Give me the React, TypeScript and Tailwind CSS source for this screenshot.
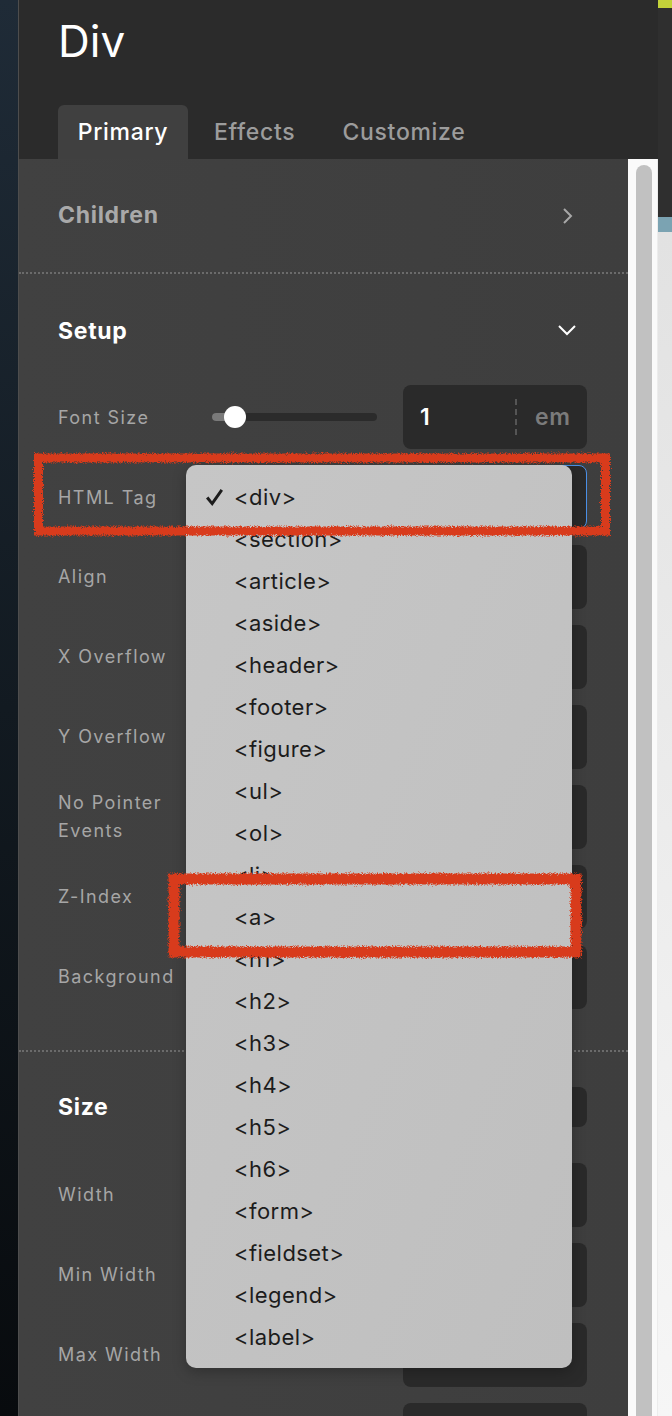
const tags = [
  "<div>", "<section>", "<article>", "<aside>", "<header>", "<footer>", "<figure>",
  "<ul>", "<ol>", "<li>", "<a>", "<h1>", "<h2>", "<h3>", "<h4>", "<h5>", "<h6>",
  "<form>", "<fieldset>", "<legend>", "<label>",
];

const setupRows = ["Align", "X Overflow", "Y Overflow", "No Pointer Events", "Z-Index", "Background"];
const sizeRows = ["Width", "Min Width", "Max Width", ""];

function Box({ blue = false }: { blue?: boolean }) {
  return (
    <div
      className={
        "w-[184px] h-[64px] rounded-lg bg-[#2a2a2a] shrink-0 " +
        (blue ? "border-[1.5px] border-[#4a8fe6]" : "")
      }
    />
  );
}

function Row({ label, children }: { label: string; children?: React.ReactNode }) {
  return (
    <div className="flex items-center h-[64px]">
      <div className="w-[140px] text-[18px] leading-[28px] tracking-[0.08em] text-[#a6a6a6]">{label}</div>
      <div className="flex-1 flex items-center">{children}</div>
      <Box />
    </div>
  );
}

function Separator() {
  return <div className="border-t-2 border-dotted border-[#6b6b6b]" />;
}

export default function App() {
  return (
    <div
      className="relative flex w-[672px] h-[1416px] overflow-hidden bg-[#2b2b2b]"
      style={{ fontFamily: "Inter, 'Noto Sans', sans-serif" }}
    >
      {/* left canvas strip */}
      <div className="w-[18px] shrink-0 bg-gradient-to-b from-[#1f2b37] via-[#121a21] to-[#080b0e]" />
      <div className="w-[1px] shrink-0 bg-[#4d4d4d]" />

      {/* panel */}
      <div className="w-[639px] shrink-0 flex flex-col">
        {/* header */}
        <div className="h-[159px] bg-[#2b2b2b] pl-[39px] flex flex-col">
          <div className="pt-[16px] h-[105px] text-[44px] leading-[50px] font-normal text-white">Div</div>
          <div className="flex items-stretch h-[54px] text-[23px] font-medium tracking-[0.03em]">
            <div className="w-[130px] rounded-t-md bg-[#404040] text-white flex items-center justify-center">Primary</div>
            <div className="ml-[26px] flex items-center text-[#9c9c9c]">Effects</div>
            <div className="ml-[47px] flex items-center text-[#9c9c9c]">Customize</div>
          </div>
        </div>

        {/* body */}
        <div className="flex flex-1">
          <div className="w-[609px] bg-gradient-to-r from-[#414141] to-[#3e3e3e]">
            {/* Children */}
            <div className="h-[113px] pl-[39px] pr-[54px] flex items-center justify-between">
              <span className="text-[23px] font-bold text-[#a9a9a9] tracking-[0.03em]">Children</span>
              <svg width="12" height="18" viewBox="0 0 12 18" fill="none" stroke="#a8a8a8" strokeWidth="2">
                <path d="M2 2l7 7-7 7" />
              </svg>
            </div>
            <Separator />

            {/* Setup */}
            <div className="pl-[39px] pr-[41px] pb-[41px]">
              <div className="pt-[43px] h-[71px] pr-[10px] flex justify-between items-start">
                <span className="text-[23px] leading-[28px] font-bold text-white tracking-[0.03em]">Setup</span>
                <svg width="20" height="28" viewBox="0 0 20 28" fill="none" stroke="#ffffff" strokeWidth="2">
                  <path d="M2 9l8 8 8-8" />
                </svg>
              </div>
              <div className="mt-[40px] flex flex-col gap-[16px]">
                <div className="flex items-center h-[64px]">
                  <div className="w-[154px] text-[18px] tracking-[0.08em] text-[#a6a6a6]">Font Size</div>
                  <div className="relative w-[165px] h-[8px] rounded-full bg-[#2b2b2b] mr-[26px]">
                    <div className="absolute left-0 top-0 h-[8px] w-[24px] rounded-l-full bg-[#7a7a7a]" />
                    <div className="absolute left-[12px] top-[-7px] w-[22px] h-[22px] rounded-full bg-white" />
                  </div>
                  <div className="w-[184px] h-[64px] rounded-lg bg-[#2a2a2a] flex items-center">
                    <span className="pl-[17px] w-[112px] text-[23px] font-semibold text-white">1</span>
                    <div className="h-[36px] border-l-2 border-dashed border-[#555555]" />
                    <span className="pl-[18px] text-[23px] font-semibold tracking-[0.03em] text-[#7b7b7b]">em</span>
                  </div>
                </div>
                <div className="flex items-center h-[64px]">
                  <div className="w-[140px] text-[18px] tracking-[0.08em] text-[#a6a6a6]">HTML Tag</div>
                  <div className="flex-1" />
                  <Box blue />
                </div>
                {setupRows.map((r) => (
                  <Row key={r} label={r} />
                ))}
              </div>
            </div>
            <Separator />

            {/* Size */}
            <div className="pl-[39px] pr-[41px]">
              <div className="mt-[35px] h-[40px] flex items-center justify-between">
                <span className="text-[23px] font-bold text-white tracking-[0.03em]">Size</span>
                <div className="w-[120px] h-[40px] rounded-lg bg-[#2a2a2a]" />
              </div>
              <div className="mt-[36px] flex flex-col gap-[16px]">
                {sizeRows.map((r, i) => (
                  <Row key={i} label={r} />
                ))}
              </div>
            </div>
          </div>

          {/* scrollbar */}
          <div className="w-[30px] bg-[#fafafa] pt-[6px] pl-[8px] border-r border-[#ececec]">
            <div className="w-[16px] h-full rounded-t-full bg-[#c1c1c1]" />
          </div>
        </div>
      </div>

      {/* right edge strip */}
      <div className="flex-1 flex flex-col bg-[#2f2f2f]">
        <div className="h-[8px] bg-[#c3d23a]" />
        <div className="h-[209px]" />
        <div className="h-[15px] bg-[#7ba3b2]" />
        <div className="flex-1 bg-gradient-to-b from-[#e2e2e2] to-[#f6f6f6]" />
      </div>

      {/* dropdown menu */}
      <div className="absolute left-[186px] top-[465px] w-[386px] rounded-[10px] bg-gradient-to-br from-[#c6c6c6] to-[#bfbfbf] shadow-[0_4px_14px_rgba(0,0,0,0.25)] pt-[11px] pb-[10px]">
        {tags.map((t, i) => (
          <div key={t} className="relative h-[42px] flex items-center pl-[48px] text-[22px] tracking-[0.02em] text-[#1c1c1c]">
            {i === 0 && (
              <svg className="absolute left-[19px] top-[12px]" width="19" height="19" viewBox="0 0 19 19">
                <path d="M1 10.5 L3.4 8.6 L7 13.2 L15.6 1 L18 2.8 L7.3 18 Z" fill="#1c1c1c" />
              </svg>
            )}
            {t}
          </div>
        ))}
      </div>

      {/* red annotations */}
      <svg className="absolute inset-0 pointer-events-none" width="672" height="1416">
        <defs>
          <filter id="rough" x="-5%" y="-5%" width="110%" height="110%">
            <feTurbulence type="fractalNoise" baseFrequency="1.2" numOctaves="2" result="n" />
            <feDisplacementMap in="SourceGraphic" in2="n" scale="6" />
          </filter>
        </defs>
        <g filter="url(#rough)" fill="none" stroke="#d83a1c">
          <rect x="38.5" y="458" width="567" height="73" strokeWidth="9" />
          <rect x="174" y="879" width="402" height="73" strokeWidth="11" />
        </g>
      </svg>
    </div>
  );
}
